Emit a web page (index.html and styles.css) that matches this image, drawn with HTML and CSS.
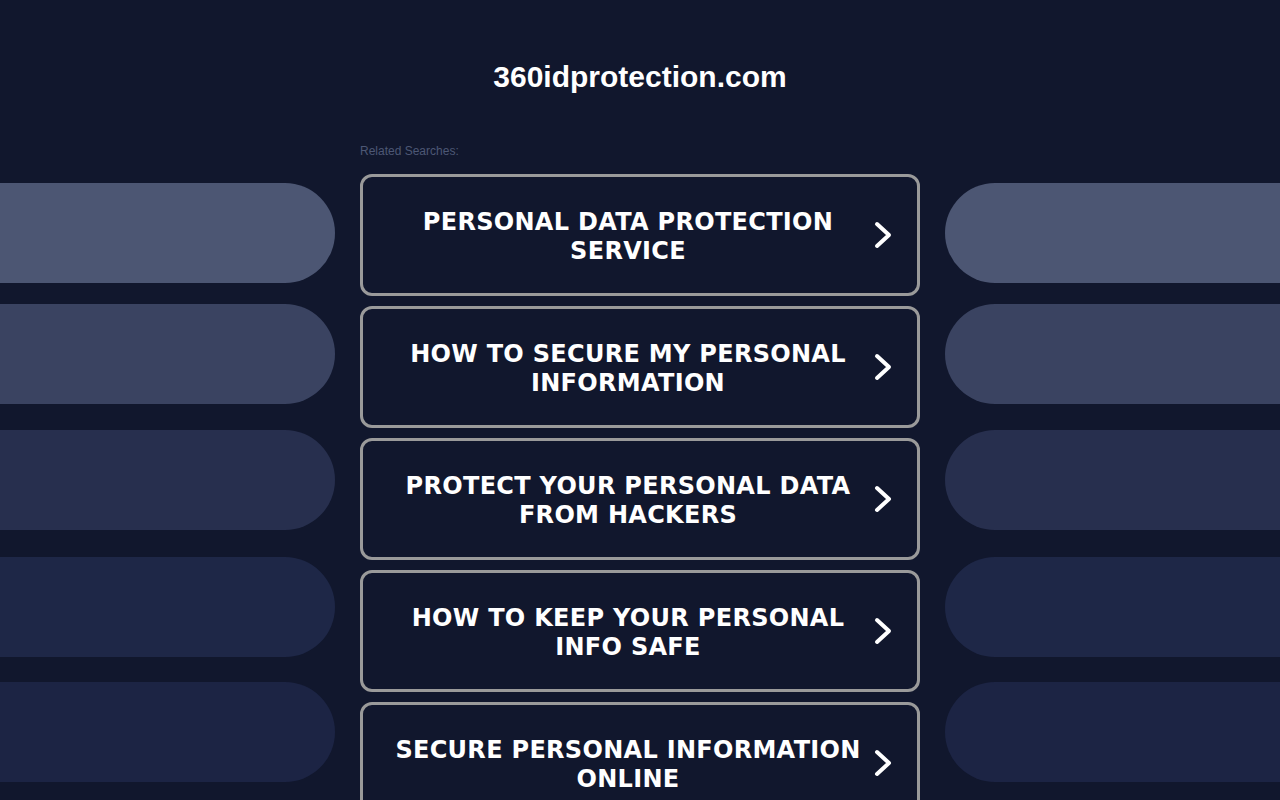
FILE: index.html
```html
<!DOCTYPE html>
<html lang="en">
<head>
<meta charset="utf-8">
<title>360idprotection.com</title>
<link rel="stylesheet" href="styles.css">
</head>
<body>
<header class="top">
  <h1 class="domain">360idprotection.com</h1>
</header>
<main class="layout">
  <div class="side side-left">
    <div class="pill p1"></div>
    <div class="pill p2"></div>
    <div class="pill p3"></div>
    <div class="pill p4"></div>
    <div class="pill p5"></div>
  </div>
  <section class="center">
    <div class="label">Related Searches:</div>
    <ul class="links">
      <li><a class="card" href="#"><span class="card-text">PERSONAL DATA PROTECTION SERVICE</span><svg class="chev" viewBox="0 0 24 30" aria-hidden="true"><polyline points="4,4 16,15 4,26"/></svg></a></li>
      <li><a class="card" href="#"><span class="card-text">HOW TO SECURE MY PERSONAL INFORMATION</span><svg class="chev" viewBox="0 0 24 30" aria-hidden="true"><polyline points="4,4 16,15 4,26"/></svg></a></li>
      <li><a class="card" href="#"><span class="card-text">PROTECT YOUR PERSONAL DATA FROM HACKERS</span><svg class="chev" viewBox="0 0 24 30" aria-hidden="true"><polyline points="4,4 16,15 4,26"/></svg></a></li>
      <li><a class="card" href="#"><span class="card-text">HOW TO KEEP YOUR PERSONAL INFO SAFE</span><svg class="chev" viewBox="0 0 24 30" aria-hidden="true"><polyline points="4,4 16,15 4,26"/></svg></a></li>
      <li><a class="card" href="#"><span class="card-text">SECURE PERSONAL INFORMATION ONLINE</span><svg class="chev" viewBox="0 0 24 30" aria-hidden="true"><polyline points="4,4 16,15 4,26"/></svg></a></li>
    </ul>
  </section>
  <div class="side side-right">
    <div class="pill p1"></div>
    <div class="pill p2"></div>
    <div class="pill p3"></div>
    <div class="pill p4"></div>
    <div class="pill p5"></div>
  </div>
</main>
</body>
</html>
```
FILE: styles.css
```css
html, body {
  margin: 0;
  padding: 0;
  overflow: hidden;
  background: #11172d;
}
body {
  font-family: "Liberation Sans", Arial, sans-serif;
  color: #fff;
}
.top {
  padding-top: 60px;
  text-align: center;
}
.domain {
  margin: 0;
  font-size: 30px;
  line-height: 34px;
  font-weight: bold;
  color: #fff;
}
.layout {
  margin-top: 50px;
  display: grid;
  grid-template-columns: 1fr 560px 1fr;
  column-gap: 25px;
  align-items: start;
}
.side {
  display: flex;
  flex-direction: column;
  padding-top: 39px;
}
.pill {
  height: 100px;
}
.side-left .pill { border-radius: 0 50px 50px 0; }
.side-right .pill { border-radius: 50px 0 0 50px; }
.p1 { background: #4c5673; }
.p2 { background: #3a4361; margin-top: 21px; }
.p3 { background: #272f4e; margin-top: 26px; }
.p4 { background: #1e2747; margin-top: 27px; }
.p5 { background: #1c2444; margin-top: 25px; }
.label {
  font-size: 12px;
  line-height: 14px;
  color: #4d5775;
  margin-bottom: 16px;
}
.links {
  list-style: none;
  margin: 0;
  padding: 0;
  display: flex;
  flex-direction: column;
  gap: 10px;
}
.card {
  display: flex;
  align-items: center;
  border: 3px solid #9a9a9a;
  border-radius: 12px;
  padding: 31px 20px 27px;
  text-decoration: none;
  color: #fff;
}
.card-text {
  flex: 1;
  text-align: center;
  font-family: "DejaVu Sans", Verdana, sans-serif;
  font-weight: bold;
  font-size: 24px;
  line-height: 29px;
  letter-spacing: 0.3px;
}
.chev {
  width: 24px;
  height: 30px;
  flex: none;
  margin-top: -4px;
}
.chev polyline {
  fill: none;
  stroke: #fff;
  stroke-width: 4;
  stroke-linecap: round;
  stroke-linejoin: round;
}
```
